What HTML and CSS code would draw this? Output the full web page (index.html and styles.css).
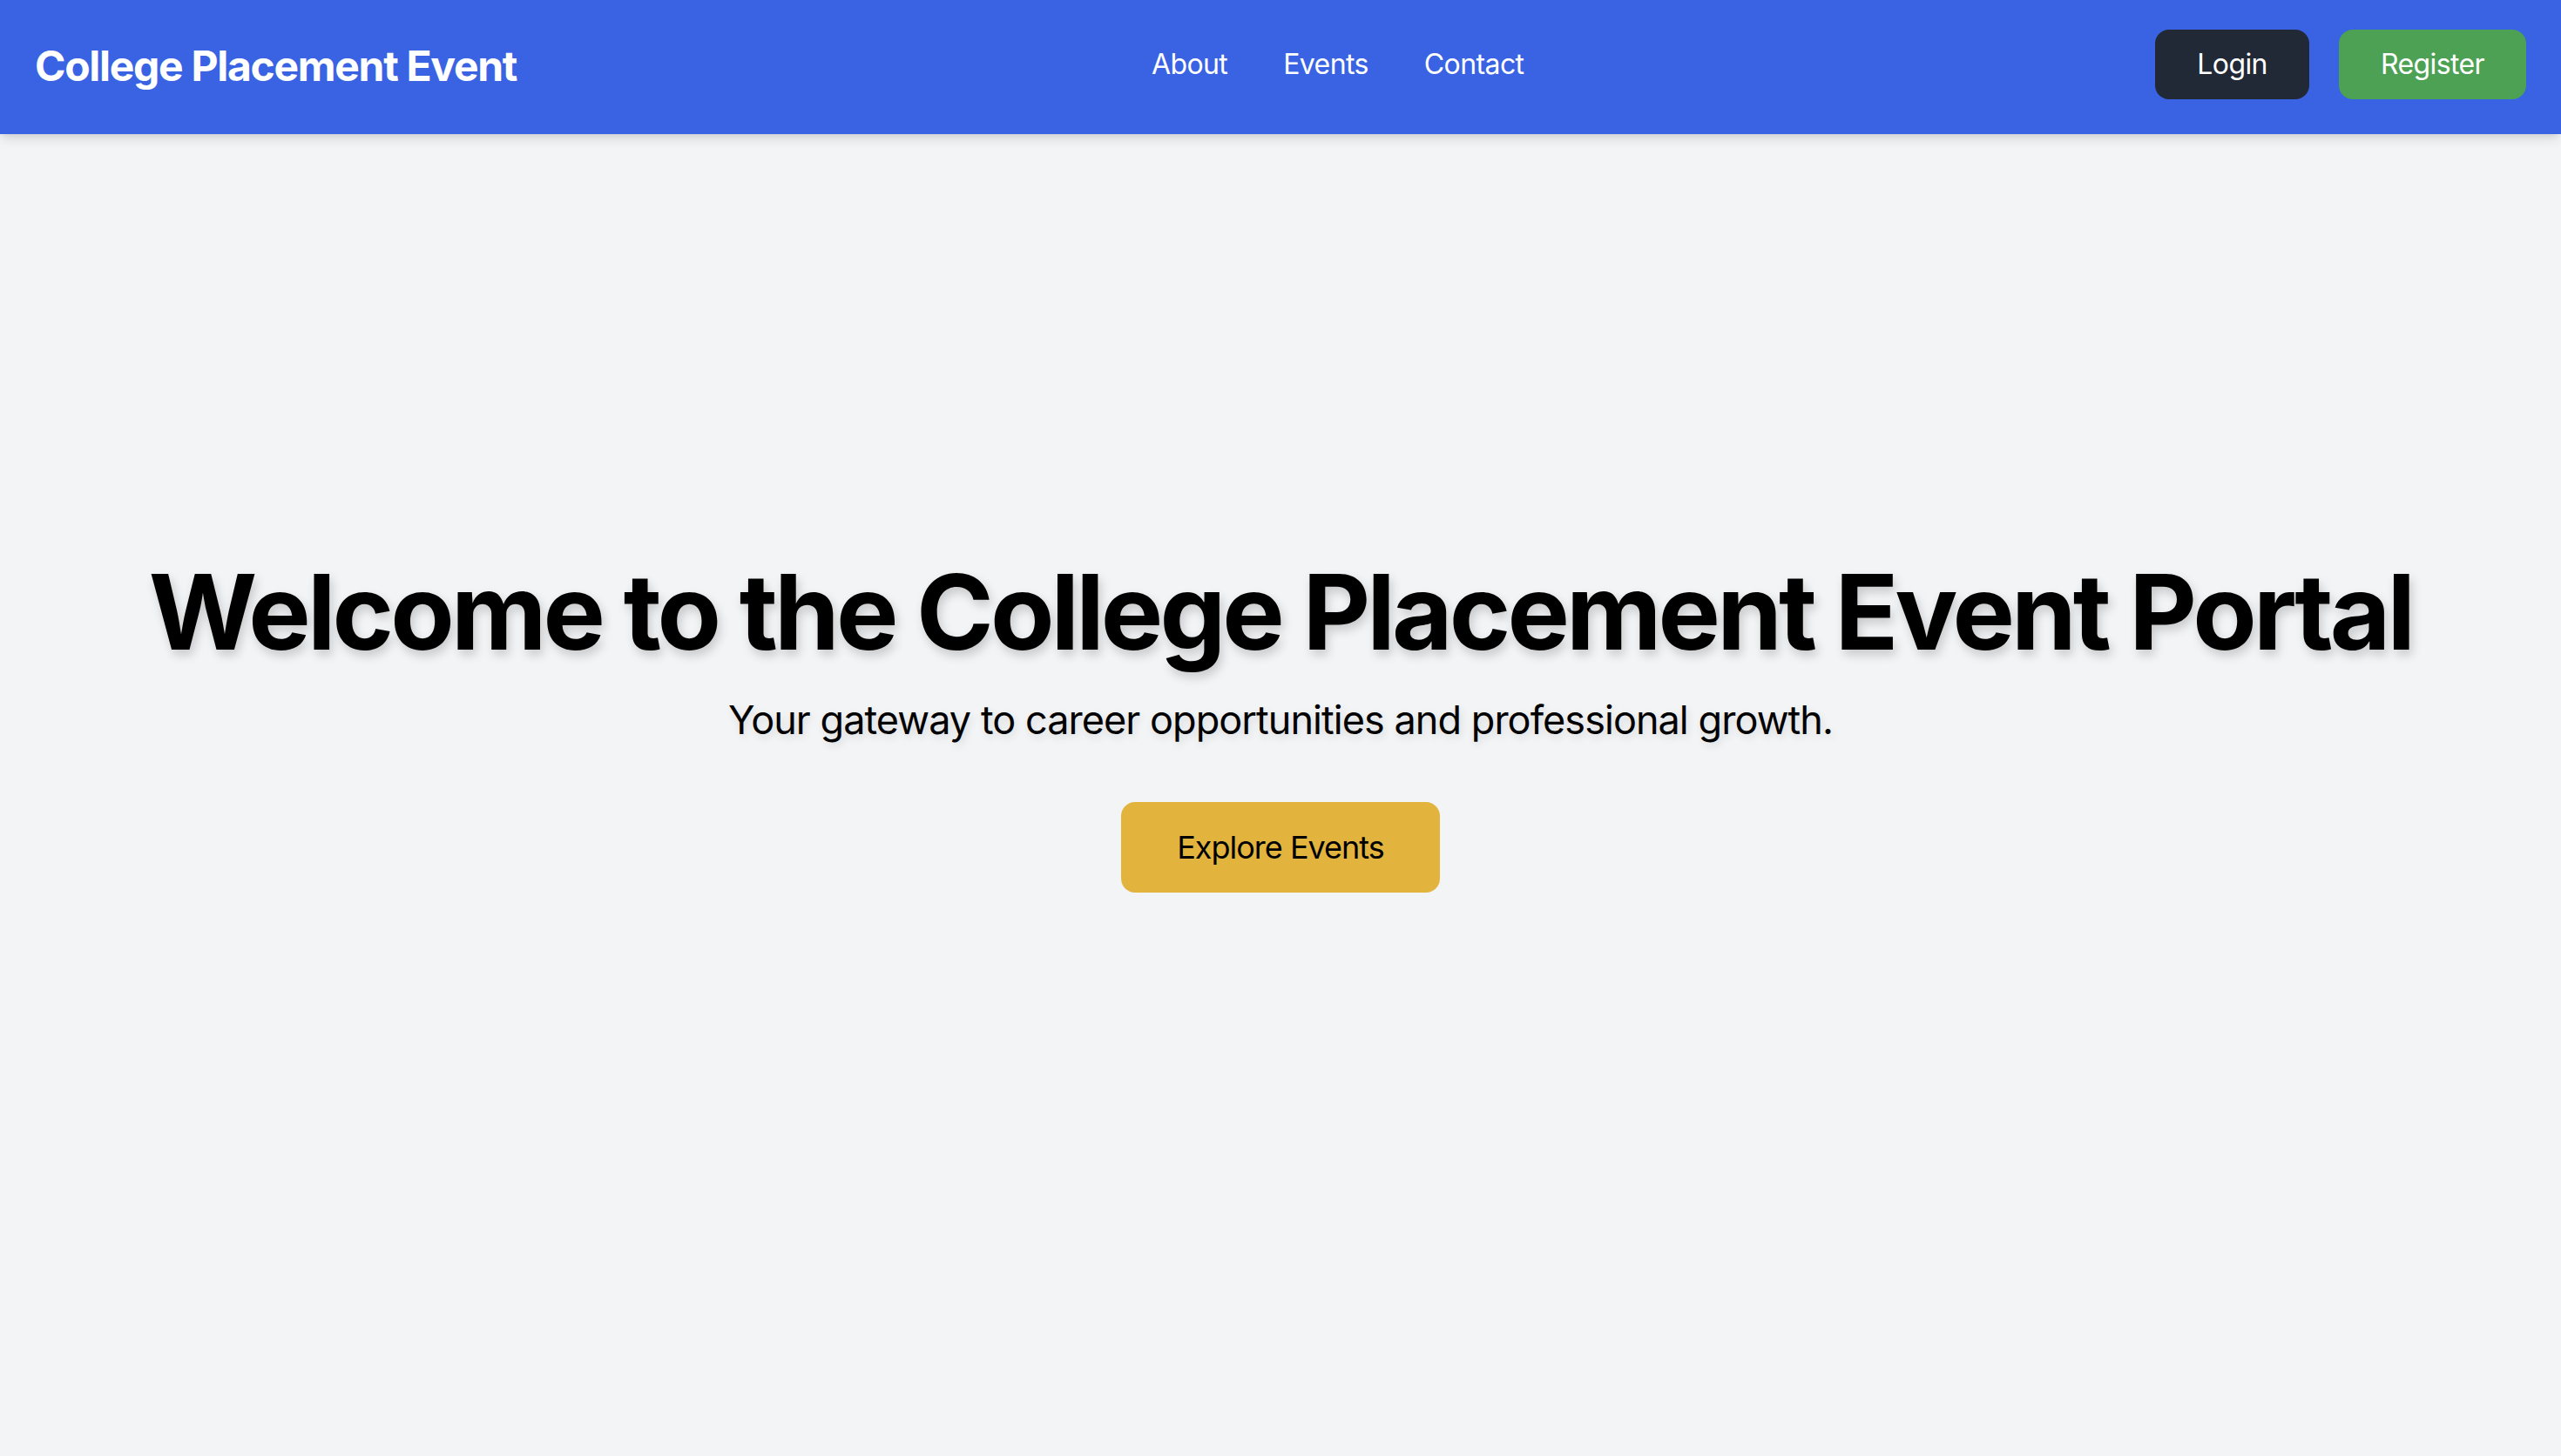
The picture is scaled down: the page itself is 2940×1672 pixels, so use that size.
FILE: index.html
```html
<!DOCTYPE html>
<html lang="en">
<head>
<meta charset="utf-8">
<title>College Placement Event</title>
<link rel="stylesheet" href="styles.css">
</head>
<body>
<header class="site-header">
  <div class="brand">College Placement Event</div>
  <nav class="main-nav">
    <a href="#" class="nav-link">About</a>
    <a href="#" class="nav-link">Events</a>
    <a href="#" class="nav-link">Contact</a>
  </nav>
  <div class="auth">
    <a href="#" class="btn btn-login">Login</a>
    <a href="#" class="btn btn-register">Register</a>
  </div>
</header>
<main class="hero">
  <h1 class="hero-title">Welcome to the College Placement Event Portal</h1>
  <p class="hero-sub">Your gateway to career opportunities and professional growth.</p>
  <a href="#" class="btn-explore">Explore Events</a>
</main>
</body>
</html>
```
FILE: styles.css
```css
* { box-sizing: border-box; }
html, body { margin: 0; padding: 0; }
body {
  background: #f3f4f6;
  font-family: Inter, "Noto Sans", "Liberation Sans", sans-serif;
  color: #000;
}
a { text-decoration: none; color: inherit; }

.site-header {
  height: 154px;
  background: #3a63e3;
  color: #fff;
  display: flex;
  align-items: center;
  justify-content: space-between;
  padding: 0 40px 6px 40px;
  box-shadow: 0 8px 12px -2px rgba(0,0,0,0.1), 0 4px 8px -4px rgba(0,0,0,0.1);
  position: relative;
  z-index: 1;
}
.brand {
  font-size: 48px;
  line-height: 64px;
  font-weight: 700;
  letter-spacing: -1.3px;
  padding-top: 4px;
}
.main-nav {
  display: flex;
  gap: 64px;
  padding-left: 4px;
}
.nav-link {
  font-size: 32px;
  line-height: 48px;
  color: #fff;
  letter-spacing: -0.6px;
}
.auth {
  display: flex;
  gap: 34px;
}
.btn {
  display: inline-block;
  font-size: 32px;
  line-height: 48px;
  padding: 16px 48px;
  border-radius: 16px;
  color: #fff;
  letter-spacing: -0.6px;
}
.btn-login { background: #222936; }
.btn-register { background: #4ca155; }

.hero {
  min-height: calc(100vh - 154px);
  padding-bottom: 158px;
  display: flex;
  flex-direction: column;
  align-items: center;
  justify-content: center;
  text-align: center;
}
.hero-title {
  margin: 0 0 32px 0;
  font-size: 120px;
  line-height: 120px;
  font-weight: 700;
  letter-spacing: -3.9px;
  text-shadow: 3px 6px 12px rgba(0,0,0,0.18);
}
.hero-sub {
  margin: 0 0 62px 0;
  font-size: 45px;
  line-height: 64px;
  letter-spacing: -0.95px;
  text-shadow: 2px 4px 10px rgba(0,0,0,0.12);
}
.btn-explore {
  display: inline-block;
  background: #e2b43e;
  color: #000;
  font-size: 36px;
  line-height: 56px;
  padding: 24px 64px;
  border-radius: 16px;
  letter-spacing: -1px;
}
```
